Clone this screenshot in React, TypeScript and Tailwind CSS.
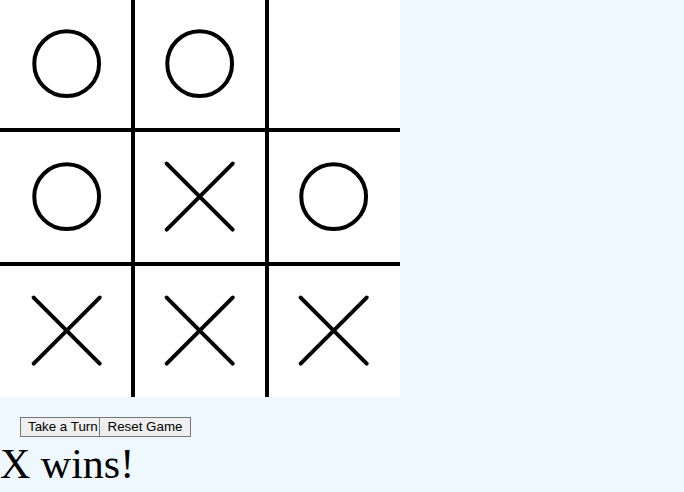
const board = ["O", "O", "", "O", "X", "O", "X", "X", "X"];

// marks are drawn on a 133.33 square, anchored to the board's outer edge
const colAlign = ["justify-start", "justify-center", "justify-end"];
const rowAlign = ["items-start", "items-center", "items-end"];

function Mark({ value }: { value: string }) {
  return (
    <svg width="133.33" height="133.33" viewBox="0 0 133.33 133.33" className="block shrink-0">
      {value === "O" && (
        <circle cx="66.67" cy="66.67" r="32.4" fill="none" stroke="black" strokeWidth="4" />
      )}
      {value === "X" && (
        <g stroke="black" strokeWidth="4" strokeLinecap="round">
          <line x1="33.67" y1="33.67" x2="99.67" y2="99.67" />
          <line x1="99.67" y1="33.67" x2="33.67" y2="99.67" />
        </g>
      )}
    </svg>
  );
}

export default function App() {
  return (
    <div className="min-h-screen bg-[#f0f8ff] overflow-hidden">
      {/* Board */}
      <div className="w-[400px] h-[400px] -mt-[3px] bg-black grid grid-cols-[131.33px_129.33px_131.33px] grid-rows-[131.33px_129.33px_131.33px] gap-[4px]">
        {board.map((v, i) => (
          <div
            key={i}
            className={`bg-white flex overflow-visible ${colAlign[i % 3]} ${rowAlign[Math.floor(i / 3)]}`}
          >
            <Mark value={v} />
          </div>
        ))}
      </div>

      {/* Controls */}
      <div className="flex pl-[20px] pt-[20px] font-['Liberation_Sans',Arial,sans-serif] text-[13.33px] text-black">
        <button className="w-[80px] h-[20px] pl-[7px] text-left bg-[#efefef] border border-[#767676] leading-none whitespace-nowrap">
          Take a Turn
        </button>
        <button className="w-[91px] h-[20px] bg-[#efefef] border border-[#767676] border-l-0 leading-none whitespace-nowrap">
          Reset Game
        </button>
      </div>

      <div className="mt-[3px] font-['Liberation_Serif','Times_New_Roman',serif] text-[42px] leading-[48px] text-black">
        X wins!
      </div>
    </div>
  );
}
